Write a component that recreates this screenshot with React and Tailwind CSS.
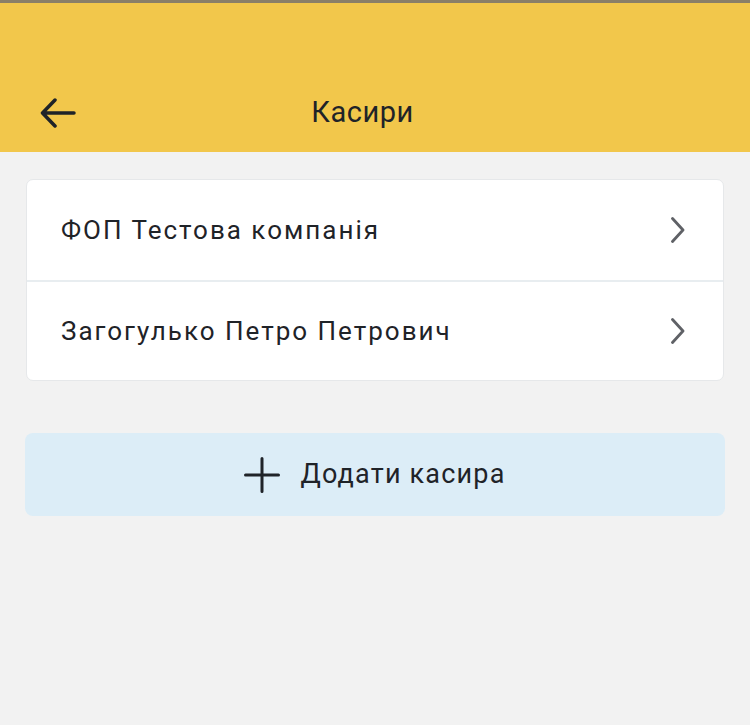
const cashiers = ["ФОП Тестова компанія", "Загогулько Петро Петрович"];

function Chevron() {
  return (
    <svg width="14" height="26" viewBox="0 0 14 26" fill="none" className="text-[#5f6166]">
      <path d="M1.5 1.5 L12 13 L1.5 24.5" stroke="currentColor" strokeWidth="2.8" strokeLinecap="round" strokeLinejoin="round" />
    </svg>
  );
}

export default function App() {
  return (
    <div className="min-h-[725px] bg-[#f2f2f2] font-['Roboto',sans-serif] text-[#1f2328]">
      <div className="h-[3px] bg-[#8a7f68]" />
      <header className="h-[149px] bg-[#f2c74b] flex items-end">
        <div className="relative flex h-[80px] w-full items-center justify-center pr-[25px]">
          <button className="absolute left-[40px] top-[26px]">
            <svg width="36" height="30" viewBox="0 0 36 30" fill="none">
              <path d="M34 15 H3 M15 2 L2.5 15 L15 28" stroke="#1f2328" strokeWidth="3.5" strokeLinecap="round" strokeLinejoin="round" />
            </svg>
          </button>
          <h1 className="text-[29px] leading-none tracking-[0.5px]">Касири</h1>
        </div>
      </header>

      <div className="px-[25px] pt-[27px]">
        <ul className="mx-px rounded-[7px] border border-[#e6e8ea] bg-white">
          {cashiers.map((name, i) => (
            <li
              key={name}
              className={
                "flex h-[100px] items-center justify-between pl-[34px] pr-[38px] " +
                (i > 0 ? "border-t-2 border-[#e8edf0]" : "")
              }
            >
              <span className="text-[26px] tracking-[2px]">{name}</span>
              <Chevron />
            </li>
          ))}
        </ul>

        <button className="mt-[52px] flex h-[83px] w-full items-center justify-center gap-[20px] rounded-[8px] bg-[#dcedf7]">
          <svg width="36" height="36" viewBox="0 0 36 36" fill="none" className="text-[#1f2328]">
            <path d="M18 1.5 V34.5 M1.5 18 H34.5" stroke="currentColor" strokeWidth="3" strokeLinecap="round" />
          </svg>
          <span className="text-[27px] tracking-[1.2px]">Додати касира</span>
        </button>
      </div>
    </div>
  );
}
